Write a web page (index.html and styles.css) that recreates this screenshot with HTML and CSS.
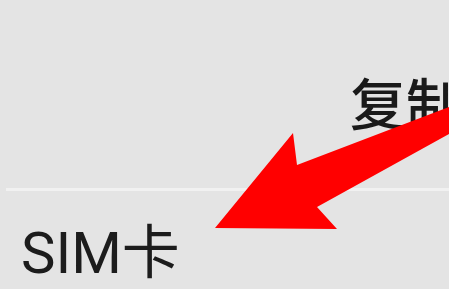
FILE: index.html
```html
<!DOCTYPE html>
<html lang="zh-CN">
<head>
<meta charset="utf-8">
<link rel="stylesheet" href="styles.css">
</head>
<body>
<div class="screen">
  <div class="top">
    <span class="copy">复制</span>
  </div>
  <div class="divider"></div>
  <div class="row">
    <span class="sim">SIM卡</span>
  </div>
  <svg class="arrow" width="449" height="289" viewBox="0 0 449 289">
    <polygon points="215,228 293,133 297,165 449,107 449,134 317,207 337,229" fill="#ff0000"/>
  </svg>
</div>
</body>
</html>
```
FILE: styles.css
```css
html, body {
  margin: 0;
  padding: 0;
}
body {
  background: #e4e4e4;
  overflow: hidden;
}
.screen {
  position: relative;
  width: 449px;
  height: 289px;
  overflow: hidden;
  background: #e4e4e4;
}
.top {
  height: 188px;
  display: flex;
  align-items: flex-start;
  padding-left: 350px;
  box-sizing: border-box;
  padding-top: 73px;
  white-space: nowrap;
}
.copy {
  font-family: "Noto Sans CJK SC", sans-serif;
  font-size: 56px;
  line-height: 1;
  font-weight: 500;
  color: #1a1a1a;
}
.divider {
  height: 3px;
  margin-left: 6px;
  background: #f1f1f1;
}
.row {
  padding-left: 21px;
  padding-top: 33px;
}
.sim {
  font-family: Roboto, "Noto Sans CJK SC", sans-serif;
  font-size: 58px;
  line-height: 1;
  color: #1c1c1c;
}
.arrow {
  position: absolute;
  left: 0;
  top: 0;
}
```
